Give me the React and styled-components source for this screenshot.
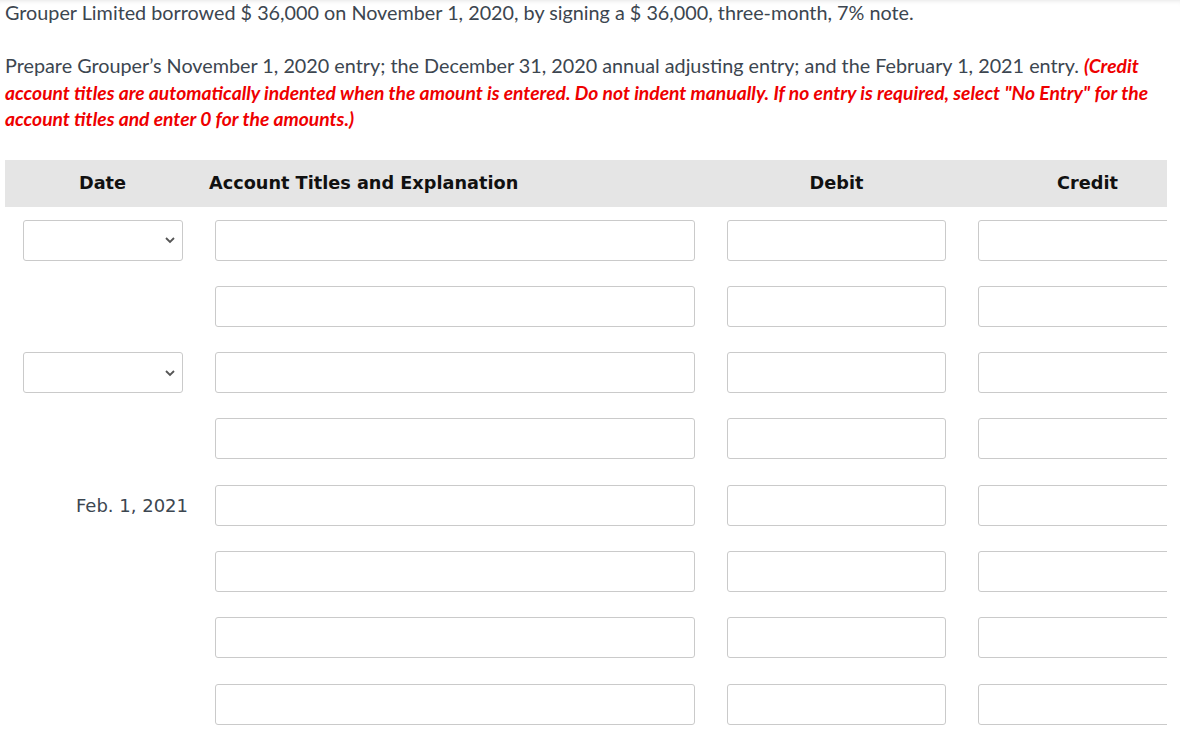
import React from 'react'
import styled, { createGlobalStyle } from 'styled-components'

const GlobalStyle = createGlobalStyle`
  html, body {
    margin: 0;
    padding: 0;
    background: #fff;
    overflow: hidden;
  }
`

const rows = [
  { date: 'select' },
  { date: null },
  { date: 'select' },
  { date: null },
  { date: 'Feb. 1, 2021' },
  { date: null },
  { date: null },
  { date: null },
]

const Page = styled.div`
  position: relative;
  height: 734px;
  padding: 0 13px 0 5px;
  box-shadow: inset 0 6px 6px -6px rgba(0, 0, 0, 0.18);
`

const Question = styled.div`
  font-family: Lato, 'Open Sans', sans-serif;
  font-size: 19.8px;
  line-height: 26.5px;
  color: #3c4650;
  max-width: 1155px;
  p {
    margin: 0;
  }
  p + p {
    margin-top: 26.5px;
  }
`

const FirstLine = styled.p`
  margin-top: -1px !important;
`

const Note = styled.span`
  color: #ee0000;
  font-weight: 700;
  font-style: italic;
  font-size: 19.25px;
  line-height: 20px;
`

const Table = styled.div`
  margin-top: 28px;
  width: 1162px;
  overflow: hidden;
`

const Grid = styled.div`
  display: grid;
  grid-template-columns: 193px 512px 251px 251px;
  width: 1207px;
`

const Head = styled.div`
  height: 47px;
  background: #e5e5e5;
  display: flex;
  align-items: center;
  justify-content: ${(p) => (p.$left ? 'flex-start' : 'center')};
  padding: ${(p) => (p.$left ? '0 0 0 11px' : '0 15px 0 17px')};
  font-family: 'DejaVu Sans', Verdana, sans-serif;
  font-weight: 700;
  font-size: 17.7px;
  color: #111;
  margin-bottom: 13px;
`

const Cell = styled.div`
  height: 41px;
  padding: 0 15px 0 17px;
  margin-bottom: 25.33px;
  display: flex;
  align-items: center;
  justify-content: flex-end;
`

const DateText = styled.span`
  font-family: 'DejaVu Sans', Verdana, sans-serif;
  font-size: 18px;
  color: #3c4650;
  margin-right: -5px;
`

const SelectBox = styled.div`
  box-sizing: border-box;
  width: 160px;
  height: 41px;
  border: 1px solid #cacaca;
  border-radius: 3px;
  background: #fff;
  display: flex;
  align-items: center;
  justify-content: flex-end;
  padding-right: 6px;
`

const Field = styled.input`
  box-sizing: border-box;
  width: ${(p) => p.$w}px;
  flex: none;
  height: 41px;
  border: 1px solid #cacaca;
  border-radius: 3px;
  background: #fff;
  outline: none;
  margin: 0;
`

const Chevron = () => (
  <svg width="12" height="8" viewBox="0 0 12 8">
    <path d="M2 2l4 4 4-4" fill="none" stroke="#555" strokeWidth="1.8" />
  </svg>
)

export default function App() {
  return (
    <Page>
      <GlobalStyle />
      <Question>
        <FirstLine>
          Grouper Limited borrowed $ 36,000 on November 1, 2020, by signing a $ 36,000, three-month, 7% note.
        </FirstLine>
        <p>
          Prepare Grouper’s November 1, 2020 entry; the December 31, 2020 annual adjusting entry; and the
          February 1, 2021 entry.{' '}
          <Note>
            (Credit account titles are automatically indented when the amount is entered. Do not indent
            manually. If no entry is required, select "No Entry" for the account titles and enter 0 for the
            amounts.)
          </Note>
        </p>
      </Question>
      <Table>
        <Grid>
          <Head>Date</Head>
          <Head $left>Account Titles and Explanation</Head>
          <Head>Debit</Head>
          <Head>Credit</Head>
          {rows.map((row, i) => (
            <React.Fragment key={i}>
              <Cell>
                {row.date === 'select' ? (
                  <SelectBox>
                    <Chevron />
                  </SelectBox>
                ) : row.date ? (
                  <DateText>{row.date}</DateText>
                ) : null}
              </Cell>
              <Cell>
                <Field $w={480} />
              </Cell>
              <Cell>
                <Field $w={219} />
              </Cell>
              <Cell>
                <Field $w={219} />
              </Cell>
            </React.Fragment>
          ))}
        </Grid>
      </Table>
    </Page>
  )
}
